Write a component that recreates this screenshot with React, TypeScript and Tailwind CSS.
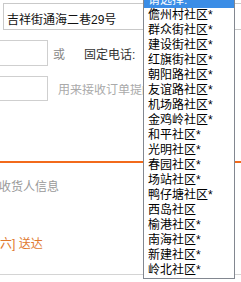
const communities = [
  "儋州村社区*",
  "群众街社区*",
  "建设街社区*",
  "红旗街社区*",
  "朝阳路社区*",
  "友谊路社区*",
  "机场路社区*",
  "金鸡岭社区*",
  "和平社区*",
  "光明社区*",
  "春园社区*",
  "场站社区*",
  "鸭仔塘社区*",
  "西岛社区",
  "榆港社区*",
  "南海社区*",
  "新建社区*",
  "岭北社区*",
];

const App = () => {
  return (
    <div className="relative h-[282px] w-[241px] overflow-hidden bg-white font-['Liberation_Sans','Noto_Sans_CJK_SC',sans-serif] text-[12px] leading-[12px]">
      <div className="pl-[3px] pt-[3px]">
        <div className="flex h-[27px] w-[300px] items-end border border-[#c9c9c9] pb-[3px] pl-[3px] text-[#111]">
          吉祥街通海二巷29号
        </div>
      </div>

      <div className="mt-[10px] flex h-[26px] items-center">
        <div className="h-[26px] w-[48px] border-y border-r border-[#cfcfcf]" />
        <span className="ml-[5px] mt-[3px] text-[#888]">或</span>
        <span className="ml-[19px] mt-[3px] text-[#333]">固定电话:</span>
      </div>

      <div className="mt-[10px] flex h-[25px] items-center">
        <div className="h-[25px] w-[48px] border-y border-r border-[#cfcfcf]" />
        <span className="ml-[10px] mt-[2px] w-[85px] overflow-hidden whitespace-nowrap text-[#aaa]">用来接收订单提醒短信</span>
      </div>

      <div className="mt-[60px] h-[2px] w-full bg-[#f26a1b]" />

      <div className="ml-[-1px] mt-[18px] text-[#999]">收货人信息</div>

      <div className="ml-[-12px] mt-[45px] whitespace-nowrap text-[#e0782c]">周六] 送达</div>

      <div className="mt-[24px] h-px w-full bg-[#d4d4d4]" />

      <ul className="absolute left-[143px] top-[-8px] w-[92px] border border-[#828790] bg-white text-black">
        <li className="h-[15px] bg-[#3b8de6] pl-[4px] leading-[15px] text-white">请选择:</li>
        {communities.map((name) => (
          <li key={name} className="h-[15px] whitespace-nowrap pl-[4px] leading-[15px]">
            {name}
          </li>
        ))}
      </ul>
    </div>
  );
};

export default App;
